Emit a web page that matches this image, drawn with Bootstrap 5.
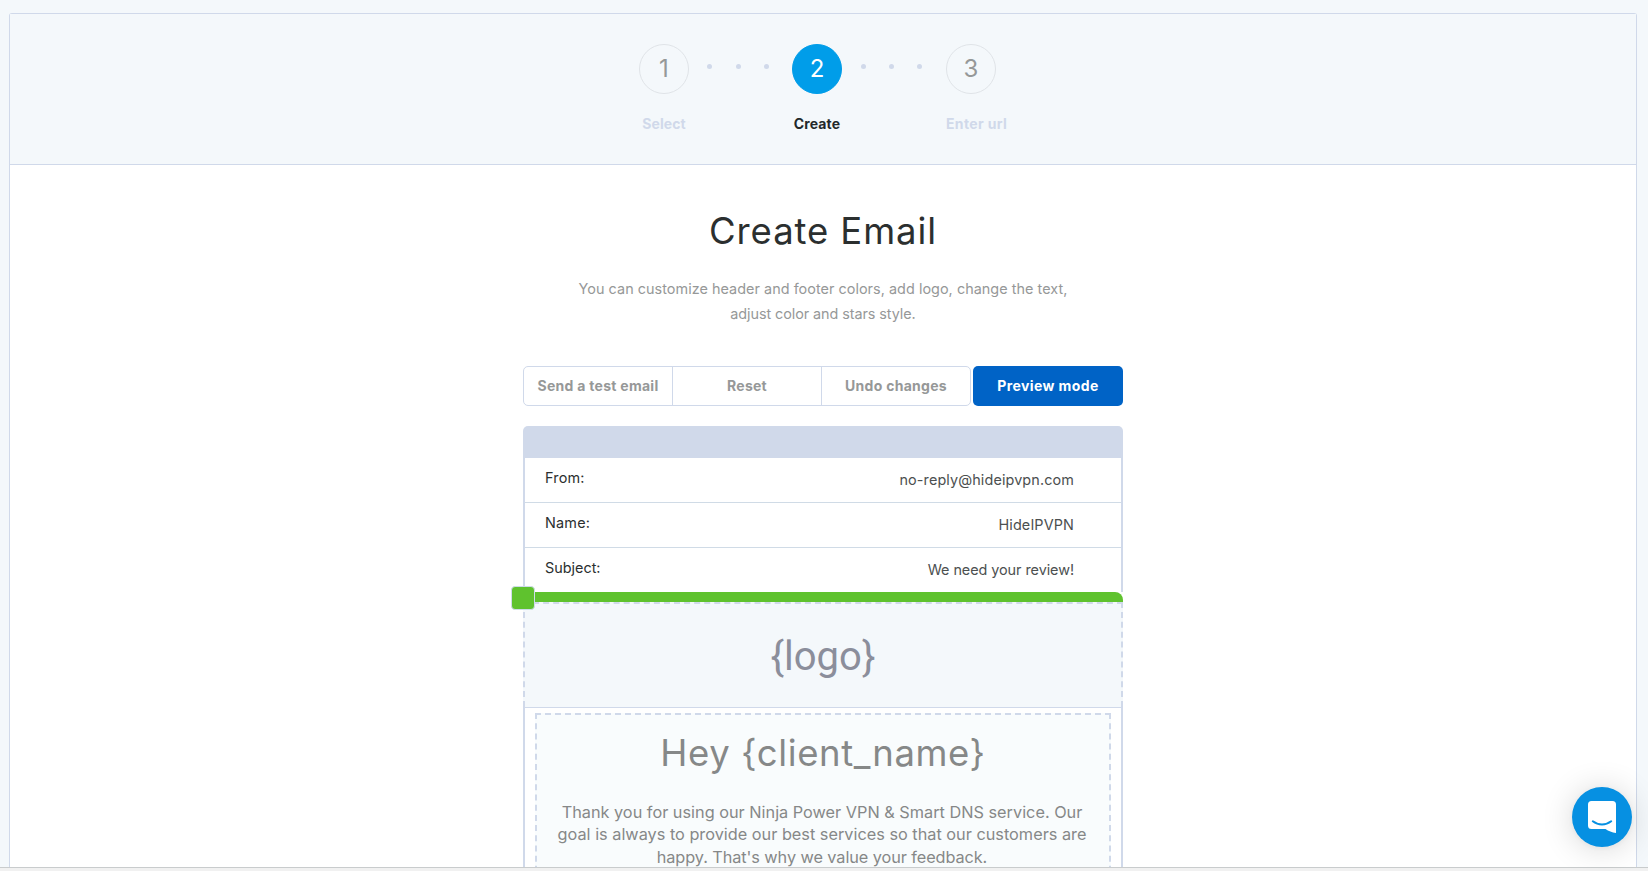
<!DOCTYPE html>
<html lang="en">
<head>
<meta charset="utf-8">
<meta name="viewport" content="width=device-width, initial-scale=1">
<title>Create Email</title>
<link href="https://cdn.jsdelivr.net/npm/bootstrap@5.3.0/dist/css/bootstrap.min.css" rel="stylesheet">
<script src="https://cdn.jsdelivr.net/npm/bootstrap@5.3.0/dist/js/bootstrap.bundle.min.js" defer></script>
<style>
  :root { --line: #d0d9ea; --tint: #f4f8fb; --ink: #2b2f2f; --muted: #969898; }
  html, body { height: 100%; overflow: hidden; }
  body { background: var(--tint); color: var(--ink); font-family: Inter, "Open Sans", sans-serif; font-size: 14.4px; line-height: 20px; }
  .viewport { height: 867px; overflow: hidden; padding: 13px 11px 0 9px; }
  .footer-edge { height: 4px; background: #f1f1f1; border-top: 1px solid #c9cccd; }
  .panel { border: 1px solid var(--line); border-bottom: 0; border-radius: 3px 3px 0 0; height: 900px; background: #fff; }
  .wizard { height: 151px; padding-top: 30px; background: var(--tint); border-bottom: 1px solid var(--line); }
  .step { width: 50px; color: #d0d9ea; font-size: 14px; font-weight: 700; letter-spacing: .1px; white-space: nowrap; }
  .step-last { width: 61px; letter-spacing: .35px; }
  .step-no { width: 50px; height: 50px; margin-bottom: 20px; border: 1px solid #e0e4e8; color: var(--muted); font-size: 24px; font-weight: 400; letter-spacing: 0; }
  .step.current { color: #22282a; }
  .current .step-no { background: #009de9; border-color: #009de9; color: #fff; }
  .dots { width: 103px; padding: 20px 0 0 18px; gap: 23.5px; }
  .dots + .current + .dots { width: 104px; padding-left: 19px; gap: 23px; }
  .dots i { width: 5px; height: 5px; border-radius: 50%; background: #d0d9ea; }
  h1 { font-size: 36.5px; line-height: 42px; font-weight: 400; letter-spacing: .9px; margin: 45px 0 24px; }
  .intro { color: var(--muted); line-height: 25px; height: 90px; margin: 0; letter-spacing: .04px; }
  .intro span { letter-spacing: -.07px; }
  .builder { width: 600px; margin-left: 513px; }
  .tool-row { height: 40px; gap: 2px; margin-bottom: 20px; }
  .tool-row .btn { font-size: 14px; font-weight: 700; line-height: 20px; padding: 0; letter-spacing: .28px; white-space: nowrap; }
  .tool-row .btn-group { width: 448px; }
  .btn-tool { --bs-btn-color: var(--muted); --bs-btn-border-color: var(--line); --bs-btn-border-radius: 5px; width: 150px; }
  .tool-row .btn-preview { --bs-btn-color: #fff; --bs-btn-bg: #0063c6; --bs-btn-border-radius: 5px; width: 150px; letter-spacing: .4px; }
  .mail-top { height: 32px; border-radius: 5px 5px 0 0; background: #d0d9ea; }
  .mail-fields { border: solid var(--line); border-width: 0 2px; height: 134px; }
  .field { height: 45px; padding: 10px 47px 0 20px; border-bottom: 1px solid #d0dbe6; }
  .field:last-child { border: 0; }
  .field dt { font-weight: 400; margin: 0; letter-spacing: .2px; }
  .field dd { margin: 2px 0 0; color: #4c5050; letter-spacing: .12px; }
  .field:last-child dt { letter-spacing: 0; }
  .field:last-child dd { letter-spacing: -.05px; }
  .accent-bar { height: 10px; background: #5fc22e; border-top-right-radius: 8px; }
  .swatch { width: 24px; height: 24px; left: -12px; top: -6px; background: #5fc22e; border: 1px solid #cfdcea; border-radius: 4px; }
  .logo-slot { height: 105px; border: 2px dashed var(--line); border-bottom: 0; background: var(--tint); color: #8b8e9b; font: 400 40px/1 Roboto, sans-serif; padding-top: 33px; }
  .mail-body { border: solid var(--line); border-width: 1px 2px 0; padding: 5px 10px 0; }
  .text-slot { height: 220px; border: 2px dashed var(--line); background: #f9fcfd; color: #868888; padding-top: 17px; }
  h2 { font-size: 36.5px; line-height: 42px; font-weight: 400; letter-spacing: .6px; margin: 0 0 27px; }
  .text-slot p { font-size: 16.3px; line-height: 22.4px; margin-left: -2px; }
  .text-slot p span { letter-spacing: -.08px; }
  .chat { position: fixed; right: 16px; bottom: 24px; width: 60px; height: 60px; background: #0690e2; box-shadow: 0 1px 6px rgba(0,0,0,.06), 0 2px 32px rgba(0,0,0,.16); }
</style>
</head>
<body>
<div class="viewport">
  <main class="panel">
    <header class="wizard d-flex justify-content-center align-items-start">
      <div class="step d-flex flex-column align-items-center"><span class="step-no rounded-circle d-flex align-items-center justify-content-center">1</span>Select</div>
      <div class="dots d-flex"><i></i><i></i><i></i></div>
      <div class="step current d-flex flex-column align-items-center"><span class="step-no rounded-circle d-flex align-items-center justify-content-center">2</span>Create</div>
      <div class="dots d-flex"><i></i><i></i><i></i></div>
      <div class="step step-last"><span class="step-no rounded-circle d-flex align-items-center justify-content-center">3</span>Enter url</div>
    </header>
    <h1 class="text-center">Create Email</h1>
    <p class="intro text-center">You can customize header and footer colors, add logo, change the text,<br><span>adjust color and stars style.</span></p>
    <section class="builder">
      <div class="tool-row d-flex">
        <div class="btn-group">
          <button class="btn btn-tool">Send a test email</button>
          <button class="btn btn-tool">Reset</button>
          <button class="btn btn-tool">Undo changes</button>
        </div>
        <button class="btn btn-preview">Preview mode</button>
      </div>
      <div class="mail-top"></div>
      <dl class="mail-fields mb-0">
        <div class="field d-flex justify-content-between"><dt>From:</dt><dd>no-reply@hideipvpn.com</dd></div>
        <div class="field d-flex justify-content-between"><dt>Name:</dt><dd>HideIPVPN</dd></div>
        <div class="field d-flex justify-content-between"><dt>Subject:</dt><dd>We need your review!</dd></div>
      </dl>
      <div class="accent-bar position-relative"><span class="swatch position-absolute"></span></div>
      <div class="logo-slot text-center">{logo}</div>
      <div class="mail-body">
        <div class="text-slot text-center">
          <h2>Hey {client_name}</h2>
          <p>Thank you for using our Ninja Power VPN &amp; Smart DNS service. Our<br>goal is always to provide our best services so that our customers are<br><span>happy. That's why we value your feedback.</span></p>
        </div>
      </div>
    </section>
  </main>
</div>
<div class="footer-edge"></div>
<button class="chat btn rounded-circle border-0 p-0" aria-label="Open chat">
  <svg class="d-block mx-auto" width="28" height="32" viewBox="0 0 28 32"><path fill="#fff" d="M3.5 0h21A3.5 3.5 0 0 1 28 3.5V32c-4-.6-7.5-2-10.500-4h-14A3.5 3.5 0 0 1 0 24.5v-21A3.5 3.5 0 0 1 3.5 0Z"/><path d="M4.8 20.300c5.500 4.200 12.900 4.200 18.400 0" fill="none" stroke="#0690e2" stroke-width="2" stroke-linecap="round"/></svg>
</button>
</body>
</html>
